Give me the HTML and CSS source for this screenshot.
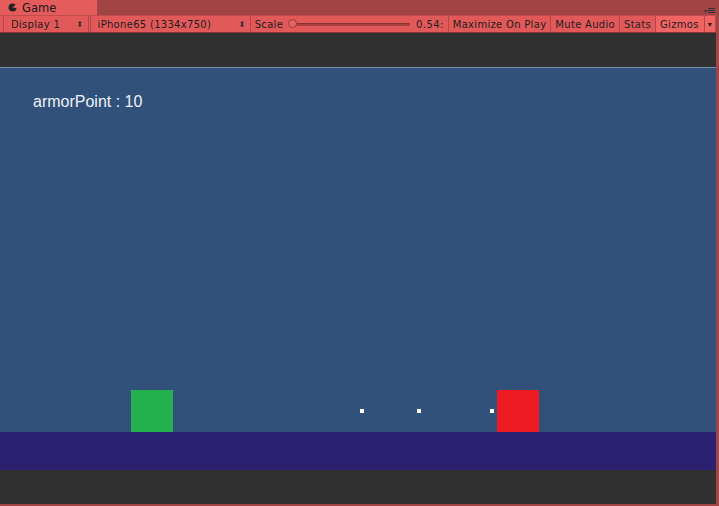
FILE: index.html
```html
<!DOCTYPE html>
<html lang="en">
<head>
    <meta charset="UTF-8">
    <title>Game</title>
    <link rel="stylesheet" href="styles.css">
</head>
<body>
    <div class="window">
        <div class="tabbar">
            <div class="tab">
                <svg class="tab-icon" width="9" height="9" viewBox="0 0 9 9">
                    <path d="M4.5 0.5 A4 4 0 1 0 8.5 5 L4.5 4.5 L7.5 1.8 A4 4 0 0 0 4.5 0.5 Z" fill="#222"/>
                </svg>
                <span>Game</span>
            </div>
            <div class="tab-menu">
                <span class="tab-arrow">▾</span><span class="tab-lines"></span>
            </div>
        </div>

        <div class="toolbar">
            <div class="tool dropdown display">Display 1<span class="updown">⬍</span></div>
            <div class="tool dropdown resolution">iPhone65 (1334x750)<span class="updown">⬍</span></div>
            <div class="tool scale">
                <span>Scale</span>
                <div class="slider"><div class="knob"></div></div>
                <span class="scale-value">0.54:</span>
            </div>
            <div class="tool">Maximize On Play</div>
            <div class="tool">Mute Audio</div>
            <div class="tool">Stats</div>
            <div class="tool gizmos">Gizmos<span class="gizmo-arrow">▾</span></div>
        </div>

        <div class="stage">
            <div class="letterbox"></div>
            <div class="scene">
                <div class="sky">
                    <p class="hud">armorPoint : 10</p>
                    <div class="player"></div>
                    <div class="bullet" style="left: 360px;"></div>
                    <div class="bullet" style="left: 417px;"></div>
                    <div class="bullet" style="left: 490px;"></div>
                    <div class="enemy"></div>
                </div>
                <div class="ground"></div>
            </div>
        </div>
    </div>
</body>
</html>
```

FILE: styles.css
```css
body {
    margin: 0;
    background: #a24444;
    font-family: 'DejaVu Sans', sans-serif;
}
.window {
    width: 719px;
    height: 506px;
    display: flex;
    flex-direction: column;
    background: #a24444;
}

/* tab strip */
.tabbar {
    height: 15px;
    display: flex;
    justify-content: space-between;
}
.tab {
    width: 97px;
    background: #e55c5c;
    display: flex;
    align-items: center;
    gap: 5px;
    padding-left: 8px;
    box-sizing: border-box;
    font-size: 11.5px;
    color: #1a1a1a;
}
.tab-icon {
    display: block;
}
.tab-menu {
    display: flex;
    align-items: flex-end;
    padding: 0 4px 1px 0;
    gap: 1px;
}
.tab-arrow {
    font-size: 6px;
    line-height: 6px;
    color: #333;
}
.tab-lines {
    width: 7px;
    height: 5px;
    border-top: 1px solid #333;
    border-bottom: 1px solid #333;
    position: relative;
    box-sizing: border-box;
    margin-bottom: 1px;
}
.tab-lines::after {
    content: '';
    position: absolute;
    left: 0;
    right: 0;
    top: 1px;
    border-top: 1px solid #333;
}

/* toolbar */
.toolbar {
    height: 18px;
    margin-right: 3px;
    background: #e25959;
    border-top: 1px solid #c04d4d;
    border-bottom: 1px solid #8a3636;
    box-sizing: border-box;
    display: flex;
    padding-left: 3px;
    font-size: 10px;
    letter-spacing: 0.3px;
    color: #1e1e1e;
}
.tool {
    display: flex;
    align-items: center;
    padding: 0 4px;
    border-right: 1px solid #b54848;
    white-space: nowrap;
}
.dropdown {
    justify-content: space-between;
    padding-left: 7px;
}
.display {
    width: 86px;
    box-sizing: border-box;
    border-left: 1px solid #b54848;
}
.resolution {
    width: 162px;
    box-sizing: border-box;
    margin-left: 1px;
    border-left: 1px solid #b54848;
}
.updown {
    font-size: 8px;
    color: #333;
}
.scale {
    width: 199px;
    box-sizing: border-box;
    gap: 0;
}
.slider {
    position: relative;
    width: 120px;
    height: 3px;
    margin: 0 6px 0 7px;
    background: #a84040;
    border-radius: 2px;
    box-shadow: inset 0 1px 0 #8c3333;
}
.knob {
    position: absolute;
    left: -2px;
    top: -4px;
    width: 9px;
    height: 9px;
    border-radius: 50%;
    background: #e76262;
    border: 1px solid #9c3a3a;
    box-sizing: border-box;
}
.scale-value {
    letter-spacing: 0.4px;
}
.gizmos {
    background: #f06464;
    padding-right: 0;
    gap: 5px;
}
.gizmo-arrow {
    border-left: 1px solid #b54848;
    padding: 0 3px;
    font-size: 8px;
    height: 100%;
    display: flex;
    align-items: center;
}

/* game view */
.stage {
    flex: 1;
    margin: 0 3px 2px 0;
    background: #303030;
    display: flex;
    flex-direction: column;
}
.letterbox {
    height: 34px;
}
.scene {
    border-top: 1px solid #7d93ad;
}
.sky {
    position: relative;
    height: 364px;
    background: #31507a;
}
.hud {
    margin: 0;
    padding: 25px 0 0 33px;
    font-family: 'Liberation Sans', Arial, sans-serif;
    font-size: 16px;
    color: #eef2f7;
}
.player,
.enemy {
    position: absolute;
    bottom: 0;
    width: 42px;
    height: 42px;
}
.player {
    left: 131px;
    background: #22b14c;
}
.enemy {
    left: 497px;
    background: #ed1c24;
}
.bullet {
    position: absolute;
    top: 341px;
    width: 4px;
    height: 4px;
    background: #fff;
}
.ground {
    height: 38px;
    background: #2b2170;
}
```
